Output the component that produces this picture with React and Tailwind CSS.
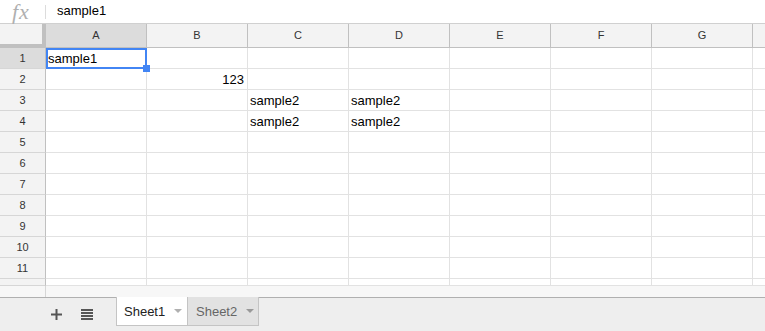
import React from "react";

const COLS = ["A", "B", "C", "D", "E", "F", "G", ""];
const ROWS = [1, 2, 3, 4, 5, 6, 7, 8, 9, 10, 11];

const data = {
  "1-A": { v: "sample1" },
  "2-B": { v: "123", right: true },
  "3-C": { v: "sample2" },
  "3-D": { v: "sample2" },
  "4-C": { v: "sample2" },
  "4-D": { v: "sample2" },
};

function Arrow({ color }) {
  return (
    <svg width="8" height="4" viewBox="0 0 8 4" className="ml-[9px]">
      <path d="M0 0 L8 0 L4 4 Z" fill={color} />
    </svg>
  );
}

export default function App() {
  return (
    <div
      className="w-[765px] h-[331px] overflow-hidden bg-white flex flex-col text-black"
      style={{ fontFamily: '"Liberation Sans", Arial, sans-serif' }}
    >
      {/* formula bar */}
      <div className="h-[24px] shrink-0 border-b border-[#d0d0d0] flex items-center">
        <div className="w-[45px] h-full flex items-center">
          <span
            className="ml-[8px] pl-[4px] pr-[4px] text-[22px] leading-[20px] tracking-[1px] italic text-[#b0b0b0]"
            style={{ fontFamily: '"Liberation Serif", "Times New Roman", serif' }}
          >
            fx
          </span>
        </div>
        <div className="w-px h-[14px] bg-[#dcdcdc]" />
        <span className="ml-[11px] text-[13px] leading-none -mt-[2px]">sample1</span>
      </div>

      {/* grid */}
      <div className="flex flex-col shrink-0 overflow-hidden">
        {/* header row */}
        <div className="flex h-[24px] shrink-0">
          <div className="w-[46px] shrink-0 h-full bg-[#f3f3f3] border-r-4 border-b-4 border-[#c0c0c0]" />
          {COLS.map((c, i) => (
            <div
              key={i}
              className={`w-[101px] shrink-0 h-full border-r border-b border-[#c0c0c0] flex items-center justify-center text-[11px] text-[#333] ${
                c === "A" ? "bg-[#dcdcdc]" : "bg-[#f3f3f3]"
              }`}
            >
              {c}
            </div>
          ))}
        </div>

        {ROWS.map((r) => (
          <div key={r} className="flex h-[21px] shrink-0">
            <div
              className={`w-[46px] shrink-0 h-full border-r border-r-[#c0c0c0] border-b border-b-[#d6d6d6] flex items-center justify-center text-[11px] text-[#333] ${
                r === 1 ? "bg-[#dcdcdc]" : "bg-[#f3f3f3]"
              }`}
            >
              {r}
            </div>
            {COLS.map((c, i) => {
              const cell = data[`${r}-${c}`];
              const sel = r === 1 && c === "A";
              return (
                <div
                  key={i}
                  className={`relative w-[101px] shrink-0 h-full border-r border-b border-[#e2e2e2] flex items-center text-[13px] ${
                    cell && cell.right ? "justify-end pr-[3px]" : "pl-[2px]"
                  }`}
                >
                  {cell ? <span className="leading-none">{cell.v}</span> : null}
                  {sel ? (
                    <div className="absolute left-0 top-0 w-[101px] h-[21px] border-2 border-[#4285f4] z-10">
                      <div className="absolute right-[-5px] bottom-[-5px] w-[7px] h-[7px] bg-[#4285f4]" />
                    </div>
                  ) : null}
                </div>
              );
            })}
          </div>
        ))}

        {/* partial row */}
        <div className="flex h-[7px] shrink-0">
          <div className="w-[46px] shrink-0 h-full bg-[#f3f3f3] border-r border-r-[#c0c0c0] border-b border-b-[#d6d6d6]" />
          {COLS.map((c, i) => (
            <div key={i} className="w-[101px] shrink-0 h-full border-r border-b border-[#e2e2e2]" />
          ))}
        </div>

        {/* scroll strip */}
        <div className="flex h-[11px] shrink-0 bg-[#f7f7f7]">
          <div className="w-[46px] shrink-0 h-full border-r border-[#d6d6d6]" />
        </div>
      </div>

      {/* tab bar */}
      <div className="flex-1 bg-[#eeeeee] border-t border-[#b0b0b0] flex items-start pl-[51px]">
        <svg width="11" height="11" viewBox="0 0 11 11" className="mt-[11px] shrink-0">
          <rect x="0" y="4.5" width="11" height="2" fill="#555" />
          <rect x="4.5" y="0" width="2" height="11" fill="#555" />
        </svg>
        <svg width="12" height="11" viewBox="0 0 12 11" className="ml-[19px] mt-[11px] shrink-0">
          <rect x="0" y="0" width="12" height="2" fill="#555" />
          <rect x="0" y="3" width="12" height="2" fill="#555" />
          <rect x="0" y="6" width="12" height="2" fill="#555" />
          <rect x="0" y="9" width="12" height="2" fill="#555" />
        </svg>
        <div className="ml-[23px] -mt-px h-[29px] w-[71px] shrink-0 bg-white border-l border-b border-[#c4c4c4] flex items-center pl-[7px]">
          <span className="text-[13px] text-[#222] leading-none">Sheet1</span>
          <Arrow color="#b0b0b0" />
        </div>
        <div className="-mt-px h-[29px] w-[72px] shrink-0 bg-[#e2e2e2] border-r border-b border-l border-[#c4c4c4] flex items-center pl-[8px]">
          <span className="text-[13px] text-[#666] leading-none">Sheet2</span>
          <Arrow color="#999" />
        </div>
      </div>
    </div>
  );
}
